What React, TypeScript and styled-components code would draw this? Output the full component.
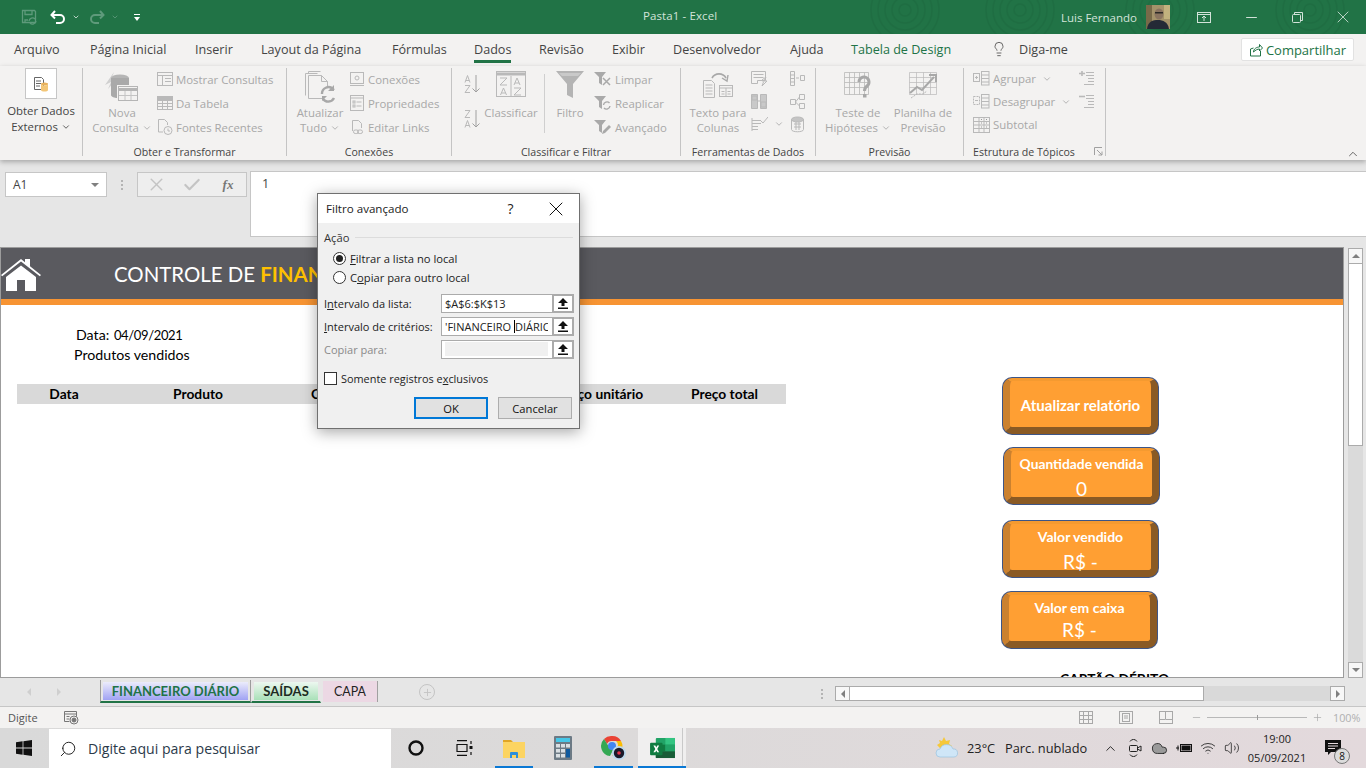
import React from 'react';
import styled, { createGlobalStyle } from 'styled-components';
import { ChevronDown, ChevronUp, Lightbulb, Search, X, Check, Minus, Plus, Volume2, Wifi, Cloud } from 'lucide-react';

const UI = '"Open Sans", "Noto Sans", sans-serif';
const SHEET = 'Lato, "Open Sans", sans-serif';
const DIS = '#a8a8a8';
const ICO = '#b9b9b9';

const Global = createGlobalStyle`
  html, body { margin: 0; padding: 0; background: #e6e6e6; }
  * { box-sizing: border-box; }
`;

const Page = styled.div`
  position: relative;
  width: 1366px;
  height: 768px;
  overflow: hidden;
  display: flex;
  flex-direction: column;
  font-family: ${UI};
  font-size: 12px;
  color: #444;
`;

/* title bar */
const TitleBar = styled.div`
  position: relative;
  height: 34px;
  flex: none;
  background: #217346;
  display: flex;
  align-items: center;
  overflow: hidden;
  color: #d3e3da;
`;
const Rings = styled.svg`
  position: absolute;
  left: 860px;
  top: 0;
  opacity: 0.22;
`;
const Qat = styled.div`
  position: relative;
  width: 643px;
  display: flex;
  align-items: center;
  padding-left: 21px;
  flex: none;
`;
const QatSlot = styled.span<{ $w: number }>`
  width: ${p => p.$w}px;
  display: flex;
  align-items: center;
  flex: none;
`;
const DocTitle = styled.div`
  position: relative;
  width: 418px;
  flex: none;
  font-size: 11.5px;
  letter-spacing: 0.1px;
  margin-top: -3px;
`;
const UserName = styled.div`
  position: relative;
  width: 85px;
  flex: none;
  font-size: 11.5px;
`;
const Avatar = styled.svg`
  position: relative;
  flex: none;
`;
const WinBtn = styled.span<{ $w: number }>`
  position: relative;
  flex: none;
  width: ${p => p.$w}px;
  display: flex;
  justify-content: center;
  align-items: center;
`;

/* tabs */
const TabRow = styled.div`
  height: 32px;
  flex: none;
  background: #f3f2f1;
  display: flex;
  align-items: center;
  padding-left: 14px;
`;
const Tab = styled.div<{ $green?: boolean; $w: number }>`
  width: ${p => p.$w}px;
  flex: none;
  margin-top: -2px;
  font-size: 12.6px;
  line-height: 17px;
  white-space: nowrap;
  color: ${p => (p.$green ? '#217346' : '#444')};
`;
const TabText = styled.span<{ $active?: boolean }>`
  position: relative;
  display: inline-block;
  &::after {
    content: '';
    display: ${p => (p.$active ? 'block' : 'none')};
    position: absolute;
    left: 0;
    right: 0;
    bottom: -5px;
    height: 3px;
    background: #217346;
  }
`;
const Bulb = styled.div`
  width: 28px;
  flex: none;
  display: flex;
  margin-top: -2px;
`;
const ShareButton = styled.div`
  position: absolute;
  left: 1241px;
  top: 38px;
  width: 113px;
  height: 23px;
  background: #fff;
  border: 1px solid #e2e2e2;
  border-radius: 2px;
  color: #217346;
  display: flex;
  align-items: center;
  justify-content: center;
  gap: 3px;
  font-size: 13px;
  font-weight: 500;
`;

/* ribbon */
const Ribbon = styled.div`
  position: relative;
  z-index: 2;
  height: 94px;
  flex: none;
  background: #f3f2f1;
  display: flex;
  padding-top: 2px;
  box-shadow: 0 2px 5px rgba(0, 0, 0, 0.28);
`;
const Group = styled.div<{ $w: number; $pad: number }>`
  position: relative;
  width: ${p => p.$w}px;
  height: 88px;
  flex: none;
  border-right: 1px solid #c4c4c4;
  display: flex;
  padding-left: ${p => p.$pad}px;
`;
const GroupLabel = styled.div<{ $inset?: number }>`
  position: absolute;
  left: 0;
  right: ${p => p.$inset ?? 0}px;
  top: 76px;
  line-height: 16px;
  text-align: center;
  font-size: 10.6px;
  color: #444;
  white-space: nowrap;
`;
const Launcher = styled.svg`
  position: absolute;
  right: 2px;
  top: 79px;
`;
const Large = styled.div<{ $w: number; $ml?: number }>`
  width: ${p => p.$w}px;
  margin-left: ${p => p.$ml ?? 0}px;
  flex: none;
  display: flex;
  flex-direction: column;
  align-items: center;
  line-height: 15px;
  font-size: 11.4px;
  color: ${DIS};
  white-space: nowrap;
`;
const LargeIcon = styled.div`
  height: 36.5px;
  display: flex;
  align-items: flex-start;
  justify-content: center;
  padding-top: 3px;
`;
const DataCol = styled.div`
  width: 82px;
  flex: none;
  display: flex;
  flex-direction: column;
  align-items: center;
  line-height: 16px;
  font-size: 11.4px;
  color: #444;
  white-space: nowrap;
`;
const SmallCol = styled.div<{ $ml?: number; $row?: number; $mt?: number }>`
  margin-left: ${p => p.$ml ?? 0}px;
  margin-top: ${p => p.$mt ?? -1}px;
  display: flex;
  flex-direction: column;
  flex: none;
  & > * { height: ${p => p.$row ?? 24}px; }
`;
const Small = styled.div`
  display: flex;
  align-items: center;
  gap: 3px;
  font-size: 11.4px;
  color: ${DIS};
  white-space: nowrap;
`;
const IconOnly = styled.div`
  display: flex;
  align-items: center;
`;
const VSep = styled.div`
  width: 1px;
  height: 59px;
  margin: 6px 0 0 6px;
  background: #cfcfcf;
  flex: none;
`;
const Caret = styled(ChevronDown).attrs({ size: 10, strokeWidth: 2 })`
  margin-left: 3px;
  vertical-align: -1px;
`;
const WideCaret = styled(Caret)`
  margin-left: 6px;
  color: ${DIS};
`;
const Collapse = styled.div`
  position: absolute;
  left: 1346px;
  top: 81px;
  display: flex;
`;
const DataBox = styled.div`
  width: 32px;
  height: 31px;
  margin-bottom: 4px;
  background: #fff;
  border: 1px solid #c6c6c6;
  display: flex;
  align-items: center;
  justify-content: center;
`;

/* formula bar */
const FormulaBar = styled.div`
  height: 87px;
  flex: none;
  background: #e6e6e6;
  display: flex;
  align-items: flex-start;
  padding: 12px 0 0 5px;
`;
const NameBox = styled.div`
  width: 102px;
  height: 25px;
  background: #fff;
  border: 1px solid #c6c6c6;
  display: flex;
  align-items: center;
  justify-content: space-between;
  padding: 0 7px;
  color: #444;
  font-size: 12px;
`;
const DownTri = styled.span`
  width: 0;
  height: 0;
  border-left: 4px solid transparent;
  border-right: 4px solid transparent;
  border-top: 4px solid #808080;
`;
const Dots = styled.div`
  width: 30px;
  height: 25px;
  display: flex;
  flex-direction: column;
  align-items: center;
  justify-content: center;
  gap: 2px;
  & > i { width: 2px; height: 2px; background: #b4b4b4; display: block; }
`;
const FnBox = styled.div`
  width: 110px;
  height: 25px;
  background: #eeeeee;
  border: 1px solid #c6c6c6;
  display: grid;
  grid-template-columns: repeat(3, 36px);
  justify-items: center;
  align-items: center;
`;
const Fx = styled.span`
  font-family: "Liberation Serif", serif;
  font-style: italic;
  font-weight: 700;
  font-size: 13px;
  color: #777;
`;
const FormulaInput = styled.div`
  margin-left: 3px;
  margin-top: -1px;
  flex: 1;
  height: 66px;
  background: #fff;
  border: 1px solid #c6c6c6;
  border-right: none;
  padding: 3px 11px;
  color: #444;
  font-size: 12.6px;
  line-height: 18px;
`;

/* worksheet */
const Workspace = styled.div`
  height: 433px;
  flex: none;
  background: #e6e6e6;
  display: flex;
`;
const Sheet = styled.div`
  width: 1344px;
  height: 431px;
  flex: none;
  background: #fff;
  border: 1px solid #9c9c9c;
  overflow: hidden;
  font-family: ${SHEET};
  color: #000;
`;
const Banner = styled.div`
  height: 57px;
  background: #5a5a5f;
  border-bottom: 6px solid #f79433;
  display: flex;
  align-items: center;
  color: #fff;
  white-space: nowrap;
`;
const HomeIcon = styled.svg`
  flex: none;
  margin-top: 1px;
`;
const BannerTitle = styled.div`
  margin-left: 73px;
  font-size: 20.4px;
  & > b { color: #ffc000; font-weight: 700; }
`;
const SheetBody = styled.div`
  display: flex;
`;
const SheetLeft = styled.div`
  width: 1001px;
  flex: none;
  padding-top: 20px;
`;
const Line = styled.div<{ $ml: number }>`
  margin-left: ${p => p.$ml}px;
  height: 20px;
  line-height: 20px;
  font-size: 14.2px;
  white-space: nowrap;
`;
const DateValue = styled.span`
  font-size: 13px;
  letter-spacing: -0.35px;
  margin-left: 1px;
`;
const TableHead = styled.div`
  margin: 19px 0 0 16px;
  width: 769px;
  height: 20px;
  background: #d9d9d9;
  display: flex;
  font-weight: 700;
  font-size: 13.8px;
  line-height: 20px;
`;
const HeadCell = styled.div<{ $w: number; $pl?: number }>`
  width: ${p => p.$w}px;
  text-align: ${p => (p.$pl ? 'left' : 'center')};
  padding-left: ${p => p.$pl ?? 0}px;
  white-space: nowrap;
`;
const SheetRight = styled.div`
  flex: 1;
  display: flex;
  flex-direction: column;
  padding-top: 72px;
`;
const Bevel = styled.div<{ $ml: number; $mt: number }>`
  width: 157px;
  height: 58px;
  flex: none;
  margin-left: ${p => p.$ml}px;
  margin-top: ${p => p.$mt}px;
  border-radius: 10px;
  overflow: hidden;
  background: #3d5587;
  padding: 1px;
`;
const BevelFace = styled.div<{ $top: number; $size: number }>`
  width: 100%;
  height: 100%;
  border-radius: 9px;
  border-style: solid;
  border-width: 3px 7px 7px 7px;
  border-color: #f59a30 #8a5a24 #8a5a24 #cb812f;
  background: #ff9f33;
  color: #fff;
  display: flex;
  flex-direction: column;
  align-items: center;
  font-weight: 700;
  font-size: ${p => p.$size}px;
  line-height: 16px;
  padding-top: ${p => p.$top}px;
  white-space: nowrap;
`;
const BevelValue = styled.div<{ $mt: number }>`
  font-weight: 400;
  font-size: 19px;
  line-height: 20px;
  margin-top: ${p => p.$mt}px;
`;
const ClippedLabel = styled.div`
  margin: 21px 0 0 58px;
  font-weight: 700;
  font-size: 13.8px;
  white-space: nowrap;
`;
const VScroll = styled.div`
  width: 15px;
  height: 430px;
  margin: 1px 0 0 4px;
  background: #dadada;
  display: flex;
  flex-direction: column;
`;
const ScrollBtn = styled.div`
  width: 15px;
  height: 16px;
  flex: none;
  background: #f7f7f7;
  border: 1px solid #ababab;
  display: flex;
  align-items: center;
  justify-content: center;
`;
const VThumb = styled.div`
  height: 182px;
  background: #fff;
  border: 1px solid #ababab;
  border-top: none;
`;
const Tri = styled.span<{ $dir: 'up' | 'down' | 'left' | 'right'; $c?: string }>`
  width: 0;
  height: 0;
  border: 4px solid transparent;
  ${p => {
    const c = p.$c ?? '#7f7f7f';
    if (p.$dir === 'up') return `border-bottom-color:${c};border-top-width:0;`;
    if (p.$dir === 'down') return `border-top-color:${c};border-bottom-width:0;`;
    if (p.$dir === 'left') return `border-right-color:${c};border-left-width:0;`;
    return `border-left-color:${c};border-right-width:0;`;
  }}
`;
const Spacer = styled.div`
  flex: 1;
`;

/* sheet tabs */
const SheetTabs = styled.div`
  height: 27px;
  flex: none;
  background: #e6e6e6;
  border-bottom: 1px solid #c6c6c6;
  display: flex;
  align-items: flex-start;
`;
const TabNav = styled.div`
  width: 100px;
  height: 24px;
  display: flex;
  align-items: center;
  padding-left: 27px;
  gap: 26px;
  flex: none;
`;
const SheetTab = styled.div<{ $w: number; $bg: string; $c: string; $active?: boolean }>`
  width: ${p => p.$w}px;
  height: 23px;
  flex: none;
  background: ${p => p.$bg};
  background-clip: content-box;
  padding: 2px 2px 1px;
  color: ${p => p.$c};
  font-family: ${SHEET};
  font-weight: 700;
  font-size: 13px;
  line-height: 18px;
  text-align: center;
  border-bottom: 2px solid #217346;
  border-left: 1px solid ${p => (p.$active ? '#9c9c9c' : 'transparent')};
  border-right: 1px solid ${p => (p.$active ? '#9c9c9c' : 'transparent')};
  white-space: nowrap;
`;
const CapaTab = styled.div`
  width: 55px;
  height: 21px;
  margin: 1px 0 0 2px;
  flex: none;
  background: #ecd8e4;
  border-right: 1px solid #a0a0a0;
  color: #222;
  font-family: ${SHEET};
  font-size: 12.4px;
  line-height: 21px;
  text-align: center;
`;
const AddSheet = styled.div`
  width: 16px;
  height: 16px;
  margin: 4px 0 0 41px;
  border: 1.5px solid #c4c4c4;
  border-radius: 50%;
  color: #c4c4c4;
  display: flex;
  align-items: center;
  justify-content: center;
  flex: none;
`;
const HScrollArea = styled.div`
  margin-left: auto;
  margin-right: 21px;
  display: flex;
  align-items: center;
  padding-top: 6px;
`;
const HDots = styled(Dots)`
  width: 20px;
  height: 14px;
  margin-right: 3px;
`;
const HBtn = styled(ScrollBtn)`
  width: 15px;
  height: 15px;
`;
const HTrack = styled.div`
  width: 480px;
  height: 15px;
  background: #d9d9d9;
  display: flex;
`;
const HThumb = styled.div`
  width: 354px;
  background: #fff;
  border: 1px solid #ababab;
  border-left: none;
`;

/* status bar */
const StatusBar = styled.div`
  height: 21px;
  flex: none;
  background: #f3f2f1;
  display: flex;
  align-items: center;
  padding-left: 8px;
  font-size: 11px;
  color: #555;
`;
const MacroIcon = styled.span`
  margin-left: 26px;
  display: flex;
`;
const ViewIcons = styled.div`
  margin-left: auto;
  display: flex;
  align-items: center;
  gap: 26px;
  margin-right: 18px;
`;
const ZoomBar = styled.div`
  display: flex;
  align-items: center;
  color: ${DIS};
  gap: 5px;
  width: 175px;
`;
const Slider = styled.div`
  position: relative;
  width: 100px;
  height: 1px;
  background: #b8b8b8;
  &::after {
    content: '';
    position: absolute;
    left: 50%;
    top: -2px;
    width: 1px;
    height: 5px;
    background: #9a9a9a;
  }
`;
const ZoomText = styled.span`
  margin-left: 5px;
  color: #b0b0b0;
  font-size: 10.8px;
`;

/* task bar */
const TaskBar = styled.div`
  height: 40px;
  flex: none;
  background: linear-gradient(90deg, #d9d9d9 0%, #dcdada 45%, #e3d9dc 100%);
  display: flex;
  align-items: stretch;
  color: #111;
`;
const StartBtn = styled.div`
  width: 49px;
  display: flex;
  align-items: center;
  justify-content: center;
  flex: none;
  padding-right: 1px;
`;
const SearchBox = styled.div`
  width: 342px;
  margin-top: 1px;
  background: #fff;
  display: flex;
  align-items: center;
  gap: 11px;
  padding-left: 10px;
  font-size: 14.1px;
  color: #2b3a4a;
  flex: none;
`;
const SearchGlass = styled(Search)`
  transform: scaleX(-1);
`;
const TaskCell = styled.div<{ $w: number; $running?: boolean; $active?: boolean }>`
  position: relative;
  width: ${p => p.$w}px;
  flex: none;
  display: flex;
  align-items: center;
  justify-content: center;
  background: ${p => (p.$active ? '#f0efef' : 'transparent')};
  &::after {
    content: '';
    display: ${p => (p.$running ? 'block' : 'none')};
    position: absolute;
    left: ${p => (p.$active ? 0 : 6)}px;
    right: ${p => (p.$active ? 0 : 5)}px;
    bottom: 0;
    height: 2px;
    background: #0a78d4;
  }
`;
const ExcelDivider = styled.span`
  position: absolute;
  right: 3px;
  top: 0;
  bottom: 0;
  width: 1px;
  background: #c9c9c9;
`;
const Tray = styled.div`
  margin-left: auto;
  display: flex;
  align-items: center;
  font-size: 13px;
  padding-right: 10px;
`;
const TrayCell = styled.div<{ $w: number; $pr?: number }>`
  width: ${p => p.$w}px;
  padding-right: ${p => p.$pr ?? 0}px;
  flex: none;
  display: flex;
  align-items: center;
  justify-content: center;
  position: relative;
`;
const TrayText = styled.div<{ $w: number }>`
  width: ${p => p.$w}px;
  flex: none;
  white-space: nowrap;
  font-size: 12.8px;
  color: #222;
`;
const Clock = styled.div`
  width: 66px;
  flex: none;
  text-align: center;
  font-size: 11px;
  line-height: 19px;
  color: #222;
`;
const NotifBadge = styled.span`
  position: absolute;
  left: 24px;
  top: 8px;
  width: 16px;
  height: 16px;
  border-radius: 50%;
  background: #dcdcdc;
  border: 1px solid #777;
  font-size: 10px;
  line-height: 14px;
  text-align: center;
  color: #111;
`;

/* dialog */
const Dialog = styled.div`
  position: absolute;
  left: 317px;
  top: 193px;
  width: 263px;
  height: 236px;
  z-index: 5;
  background: #f0f0f0;
  border: 1px solid #707070;
  box-shadow: 0 3px 14px rgba(0, 0, 0, 0.35);
  color: #222;
  font-size: 11.2px;
  display: flex;
  flex-direction: column;
`;
const DialogHead = styled.div`
  height: 29px;
  flex: none;
  background: #fff;
  display: flex;
  align-items: center;
  padding-left: 8px;
  font-size: 11.6px;
`;
const HeadTitle = styled.div`
  width: 173px;
  flex: none;
`;
const HeadHelp = styled.div`
  width: 23px;
  flex: none;
  font-size: 14px;
  text-align: center;
`;
const HeadClose = styled.div`
  margin-left: 22px;
  display: flex;
`;
const DialogBody = styled.div`
  padding: 0 6px;
  display: flex;
  flex-direction: column;
  flex: 1;
`;
const Legend = styled.div`
  display: flex;
  align-items: center;
  gap: 6px;
  height: 16px;
  margin-top: 6px;
  margin-bottom: 4px;
  color: #333;
  &::after {
    content: '';
    flex: 1;
    height: 1px;
    background: #dcdcdc;
  }
`;
const RadioRow = styled.div`
  display: flex;
  align-items: center;
  height: 19px;
  padding-left: 9px;
  gap: 4px;
`;
const RadioDot = styled.span<{ $on?: boolean }>`
  width: 13px;
  height: 13px;
  flex: none;
  border-radius: 50%;
  background: #fff;
  border: 1px solid #333;
  display: flex;
  align-items: center;
  justify-content: center;
  &::after {
    content: '';
    display: ${p => (p.$on ? 'block' : 'none')};
    width: 7px;
    height: 7px;
    border-radius: 50%;
    background: #222;
  }
`;
const Ranges = styled.div`
  margin-top: 7px;
  display: flex;
  flex-direction: column;
  gap: 4px;
`;
const RangeRow = styled.div<{ $off?: boolean }>`
  display: flex;
  align-items: center;
  height: 19px;
  color: ${p => (p.$off ? '#8a8a8a' : '#222')};
`;
const RangeLabel = styled.div`
  width: 117px;
  flex: none;
  white-space: nowrap;
  font-size: 11px;
`;
const RangeField = styled.div`
  width: 111px;
  height: 19px;
  flex: none;
  background: #fff;
  border: 1px solid #ababab;
  border-right: none;
  padding: 0 4px 0 3px;
  line-height: 17px;
  font-size: 11px;
  color: #222;
  white-space: nowrap;
`;
const RangeClip = styled.div<{ $off?: boolean }>`
  height: ${p => (p.$off ? '14px' : '17px')};
  margin-top: ${p => (p.$off ? '1px' : '0')};
  background: ${p => (p.$off ? '#f0f0f0' : 'transparent')};
  overflow: hidden;
`;
const Caret2 = styled.span`
  display: inline-block;
  width: 1px;
  height: 13px;
  background: #000;
  vertical-align: -2px;
`;
const RangeBtn = styled.div`
  width: 22px;
  height: 19px;
  flex: none;
  background: #fff;
  border: 2px solid #ababab;
  display: flex;
  align-items: center;
  justify-content: center;
`;
const CheckRow = styled.div`
  display: flex;
  align-items: center;
  gap: 4px;
  margin-top: 11px;
  height: 16px;
  font-size: 10.9px;
`;
const CheckBox = styled.span`
  width: 13px;
  height: 13px;
  background: #fff;
  border: 1px solid #333;
  flex: none;
`;
const DialogButtons = styled.div`
  display: flex;
  justify-content: flex-end;
  gap: 10px;
  margin-top: 11px;
  padding-right: 1px;
`;
const DlgBtn = styled.div<{ $primary?: boolean }>`
  width: 74px;
  height: 22px;
  background: #e1e1e1;
  border: ${p => (p.$primary ? '2px solid #0078d7' : '1px solid #adadad')};
  display: flex;
  align-items: center;
  justify-content: center;
  color: #111;
  font-size: 11.2px;
`;

/* drawings */
const S = { fill: 'none', stroke: ICO, strokeWidth: 1 };

const GridIcon = ({ size = 16, c = ICO }: { size?: number; c?: string }) => (
  <svg width={size} height={size} viewBox="0 0 16 16" fill="none" stroke={c}>
    <rect x="0.5" y="1.5" width="15" height="13" />
    <path d="M0.5 5.5h15M0.5 8.5h15M0.5 11.5h15M5.5 5v9M10.5 5v9" />
    <rect x="0.5" y="1.5" width="15" height="3" fill={c} />
  </svg>
);

const QueryPanelIcon = () => (
  <svg width="16" height="16" viewBox="0 0 16 16" {...S}>
    <rect x="0.5" y="1.5" width="15" height="13" />
    <path d="M0.5 4.5h15M5.5 5v9M8 7.5h6M8 10.5h6" />
  </svg>
);
const RecentIcon = () => (
  <svg width="16" height="18" viewBox="0 0 16 18" {...S}>
    <path d="M6 14H1.5V1.5h6l3 3V7" />
    <circle cx="11" cy="12.5" r="4" />
    <path d="M11 10.5v2.5h2" />
  </svg>
);
const ConnIcon = () => (
  <svg width="16" height="16" viewBox="0 0 16 16" {...S}>
    <rect x="1.5" y="1.5" width="13" height="11" />
    <circle cx="8" cy="7" r="2" />
    <path d="M1 14.5h14" />
  </svg>
);
const PropsIcon = () => (
  <svg width="16" height="16" viewBox="0 0 16 16" {...S}>
    <rect x="1.5" y="0.5" width="13" height="15" />
    <path d="M1.5 3h13M7.5 7h5M7.5 11h5" />
    <rect x="4" y="6" width="2" height="2" />
    <rect x="4" y="10" width="2" height="2" />
  </svg>
);
const LinkIcon = () => (
  <svg width="16" height="16" viewBox="0 0 16 16" {...S}>
    <path d="M3.5 12V1.5h6l3 3V9" />
    <rect x="4.5" y="11" width="5" height="3.5" rx="1.7" />
    <rect x="8.5" y="11" width="5" height="3.5" rx="1.7" />
  </svg>
);
const QueryLarge = () => (
  <svg width="34" height="34" viewBox="0 0 34 34" fill="none">
    <path d="M0 14 L9 1 L6 9 L11 9 L3 18 L6 11Z" fill="#d0d0d0" />
    <ellipse cx="15" cy="7" rx="9" ry="3.5" fill="#b5b5b5" />
    <path d="M6 7v17c0 2 4 3 6 3V14h12V7" fill="#a9a9a9" />
    <rect x="13.5" y="15.5" width="19" height="14" fill="#f3f2f1" stroke="#b5b5b5" />
    <path d="M13.5 18.5h19" stroke="#b5b5b5" strokeWidth="3" />
    <path d="M20 20v9M26 20v9M14 24.5h18" stroke="#c4c4c4" />
  </svg>
);
const RefreshLarge = () => (
  <svg width="32" height="32" viewBox="0 0 32 32" fill="none" stroke={ICO}>
    <path d="M1.5 2.5h12M1.5 2.5v22M4.5 0.5h12M4.5 0.5v2" />
    <path d="M4.5 4.5v23h14" fill="#f3f2f1" />
    <path d="M4.5 4.5h13l6 6v5M17.5 4.5v6h6" />
    <path d="M18 23a6.5 6.5 0 0 1 11-5l1 1M30 27a6.5 6.5 0 0 1-11 1" stroke="#a8a8a8" strokeWidth="2.4" />
    <path d="M30 14v6h-6M18 30v-5h5" fill="#a8a8a8" stroke="none" />
  </svg>
);
const SortAZ = ({ flip }: { flip?: boolean }) => (
  <svg width="16" height="20" viewBox="0 0 16 20" fill="none" stroke={ICO}>
    <path d={flip ? 'M1 1.5h5L1 8.5h5' : 'M1 8.5l2.5-7 2.5 7M1.8 6.5h3.4'} strokeWidth="1" />
    <path d={flip ? 'M1 18.5l2.5-7 2.5 7M1.8 16.5h3.4' : 'M1 11.5h5L1 18.5h5'} strokeWidth="1" />
    <path d="M12 1v17M8.5 14.5l3.5 3.5 3.5-3.5" stroke="#a0a0a0" />
  </svg>
);
const SortLarge = () => (
  <svg width="30" height="26" viewBox="0 0 30 26" fill="none" stroke={ICO}>
    <rect x="0.5" y="0.5" width="29" height="25" />
    <path d="M0.5 3h29" strokeWidth="3" />
    <path d="M15 5v20" />
    <path d="M4 7h7L4 14h7M4.500 24l3-7 3 7M5.500 22h4M18 14l3-7 3 7M19 12h4M18 17h7l-7 7h7" />
  </svg>
);
const FunnelLarge = () => (
  <svg width="28" height="28" viewBox="0 0 28 28">
    <path d="M0 0h28L17 13v14l-6-3V13Z" fill="#b4b4b4" />
    <path d="M3 2h22l-3 3H6Z" fill="#c9c9c9" />
  </svg>
);
const FunnelSmall = ({ mark }: { mark: 'x' | 'r' | 'p' }) => (
  <svg width="18" height="16" viewBox="0 0 18 16" fill="none">
    <path d="M0 1h12L8 6v8L5 12V6Z" fill="#a9a9a9" />
    {mark === 'x' && <path d="M9 7l7 7M16 7l-7 7" stroke="#a9a9a9" strokeWidth="1.5" />}
    {mark === 'r' && <path d="M9.500 10a3.500 3.500 0 0 1 6-2M16 11a3.500 3.500 0 0 1-6 2" stroke="#a9a9a9" strokeWidth="1.4" />}
    {mark === 'p' && <path d="M8 15l1-3 6-6 2 2-6 6Z" fill="#a9a9a9" />}
  </svg>
);
const TextColumnsLarge = () => (
  <svg width="32" height="28" viewBox="0 0 32 28" fill="none" stroke={ICO}>
    <path d="M1.500 26.500V9.500h8l3 3v14Z" fill="#f3f2f1" />
    <path d="M3.500 14h7M3.500 17h7M3.500 20h7M3.500 23h7" />
    <path d="M10 7a8 8 0 0 1 14 0" stroke="#a8a8a8" strokeWidth="1.6" />
    <path d="M20 7l5 3 1-6" stroke="#a8a8a8" strokeWidth="1.4" />
    <rect x="17.500" y="14.500" width="13" height="11" />
    <path d="M17.500 17h13M24 17v8M19.500 20.500h3M25.500 20.500h3M19.500 23h3M25.500 23h3" />
  </svg>
);
const MiniData = ({ kind }: { kind: number }) => (
  <svg width="17" height="17" viewBox="0 0 17 17" fill="none" stroke={ICO}>
    {kind === 0 && <path d="M0.500 1.500h14v9h-8v3h-6ZM2.500 4.500h10M2.500 7.500h10M11 10l4-3-2 4h3l-5 5 1.500-4Z" />}
    {kind === 1 && <path d="M0.500 1.500h6v14h-6ZM9.500 1.500h6v14h-6ZM7 8h2M1 3h5v4H1ZM10 9h5v5h-5Z" fill="#c9c9c9" />}
    {kind === 2 && <path d="M1 4.500h9M1 7.500h9M1 10.500h6M1 13.500h6M1 2v13M9 4l3 3 5-6" />}
    {kind === 3 && <path d="M1.500 1.500h4v14h-4ZM1.500 5h4M1.500 8.500h4M1.500 12h4M7 8h3M11.500 5.500h4v5h-4Z" />}
    {kind === 4 && <path d="M1.500 6.500h5v5h-5ZM10.500 1.500h5v5h-5ZM10.500 10.500h5v5h-5ZM6.500 9l4-5M6.500 9l4 4" />}
    {kind === 5 && (
      <>
        <ellipse cx="8.500" cy="3.500" rx="6" ry="2.500" fill="#c4c4c4" />
        <path d="M2.500 3.500v10c0 3 12 3 12 0v-10M5 8h7M5 11h7M7 6v8M10 6v8" />
      </>
    )}
  </svg>
);
const WhatIfLarge = () => (
  <svg width="30" height="30" viewBox="0 0 30 30" fill="none" stroke={ICO}>
    <path d="M1.500 1.500h24v22h-24ZM1.500 6.500h24M1.500 11.500h24M1.500 16.500h24M6.500 1.500v22M11.500 1.500v22M16.500 1.500v22M21.500 1.500v22" strokeWidth="0.8" />
    <path d="M16 11a5 5 0 1 1 8 4c-2 1.500-2.500 2-2.500 5" stroke="#a8a8a8" strokeWidth="3" />
    <rect x="20" y="23" width="3.500" height="3.500" fill="#a8a8a8" stroke="none" />
  </svg>
);
const ForecastLarge = () => (
  <svg width="30" height="28" viewBox="0 0 30 28" fill="none" stroke={ICO}>
    <path d="M1.500 1.500h27v22h-27ZM1.500 6.500h27M1.500 11.500h27M1.500 16.500h27M8.500 1.500v22M15.500 1.500v22M22.500 1.500v22" strokeWidth="0.7" />
    <path d="M2 22l7-6 5 3 12-13" stroke="#a8a8a8" strokeWidth="2" />
    <path d="M21 4h7v7" stroke="#a8a8a8" strokeWidth="2" />
    <path d="M3 27l6-4h6l4-3" strokeDasharray="2 1" />
  </svg>
);
const OutlineIcon = ({ minus }: { minus?: boolean }) => (
  <svg width="17" height="15" viewBox="0 0 17 15" fill="none" stroke={ICO}>
    <rect x="0.500" y="2.500" width="6" height="8" strokeDasharray={minus ? '2 1' : undefined} />
    <path d={minus ? 'M2 6.500h3' : 'M2 6.500h3M3.500 5v3'} />
    <rect x="8.500" y="0.500" width="7.500" height="13.500" />
    <path d="M8.500 4h7.500M8.500 7.500h7.500M8.500 11h7.500" />
  </svg>
);
const SubtotalIcon = () => (
  <svg width="17" height="16" viewBox="0 0 17 16" fill="none" stroke={ICO}>
    <rect x="0.500" y="0.500" width="16" height="15" />
    <path d="M0.500 4.500h16M0.500 8h16M0.500 11.500h16M6 0.500v15M11 0.500v15" />
    <path d="M8 2.500h1M13 2.500h1M8 6h1M13 6h1M8 10h1M13 10h1" stroke="#999" />
  </svg>
);
const LevelIcon = ({ minus }: { minus?: boolean }) => (
  <svg width="15" height="14" viewBox="0 0 15 14" fill="none" stroke={ICO}>
    <path d={minus ? 'M0 2.500h6' : 'M0 2.500h6M3 0v5'} strokeWidth="1.600" />
    <path d="M7 1.500h8M7 4.500h8M9 7.500h6M9 10.500h6M5 13.500h10" />
  </svg>
);

const ExcelLogo = () => (
  <svg width="25" height="22" viewBox="0 0 26 23">
    <rect x="6" y="1" width="20" height="21" rx="1" fill="#21a366" />
    <rect x="16" y="1" width="10" height="7" fill="#33c481" />
    <rect x="6" y="8" width="10" height="7" fill="#107c41" />
    <rect x="16" y="8" width="10" height="7" fill="#21a366" />
    <rect x="6" y="15" width="20" height="7" fill="#185c37" />
    <rect x="0" y="6" width="13" height="13" rx="1" fill="#107c41" />
    <path d="M3.500 9h2l1 2 1-2h2l-2 3.500L9.500 16h-2l-1-2-1 2h-2l2-3.500Z" fill="#fff" />
  </svg>
);
const ChromeLogo = () => (
  <svg width="26" height="26" viewBox="-1 0 26 26">
    <path d="M11 1a10 10 0 0 1 9 5H11a5 5 0 0 0-5 3L3 4a10 10 0 0 1 8-3Z" fill="#ea4335" />
    <path d="M3 4l5 8a5 5 0 0 0 4 3l-3 6A10 10 0 0 1 3 4Z" fill="#34a853" />
    <path d="M20 6a10 10 0 0 1-9 15l4-7a5 5 0 0 0 0-8Z" fill="#fbbc04" />
    <circle cx="11" cy="11" r="4" fill="#4285f4" />
    <circle cx="18" cy="18" r="7" fill="#bcd9ee" />
    <circle cx="18" cy="18" r="5.200" fill="#1a1a2a" />
    <circle cx="18" cy="18" r="1.800" fill="#e8334a" />
  </svg>
);

function Arrow() {
  return (
    <svg width="10" height="11" viewBox="0 0 10 11" fill="#111">
      <path d="M5 0l5 5H6.500v3h-3V5H0ZM0 9.500h10V11H0Z" />
    </svg>
  );
}

export default function App() {
  return (
    <Page>
      <Global />
      <TitleBar>
        <Rings width="506" height="34" viewBox="0 0 506 34" fill="none" stroke="#195c38" strokeWidth="1.500">
          {[45, 160, 300, 450].map(cx =>
            [6, 13, 20, 27, 34].map(r => <circle key={`${cx}-${r}`} cx={cx} cy={10} r={r} />)
          )}
        </Rings>
        <Qat>
          <QatSlot $w={29}>
            <svg width="16" height="16" viewBox="0 0 16 16" fill="none" stroke="#5e9a7b" strokeWidth="1.300">
              <path d="M1.500 1.500h12l1 1v11h-13ZM4 1.500v4h7v-4M4 14v-3h3" />
              <path d="M8 12a3.500 3.500 0 0 1 6-2M15 12a3.500 3.500 0 0 1-6 2" />
            </svg>
          </QatSlot>
          <QatSlot $w={22}>
            <svg width="16" height="14" viewBox="0 0 16 14" fill="none" stroke="#fff" strokeWidth="2">
              <path d="M5 1L1.500 5 5 8.500M2 5h8a3.800 3.800 0 0 1 0 8H6" />
            </svg>
          </QatSlot>
          <QatSlot $w={17}><ChevronDown size={8} color="#d3e3da" strokeWidth={2.500} /></QatSlot>
          <QatSlot $w={22}>
            <svg width="16" height="14" viewBox="0 0 16 14" fill="none" stroke="#5e9a7b" strokeWidth="2">
              <path d="M11 1l3.500 4L11 8.500M14 5H6a3.800 3.800 0 0 0 0 8h4" />
            </svg>
          </QatSlot>
          <QatSlot $w={23}><ChevronDown size={8} color="#5e9a7b" strokeWidth={2.500} /></QatSlot>
          <QatSlot $w={10}>
            <svg width="6" height="7" viewBox="0 0 6 7">
              <path d="M0 0h6v1H0ZM0 3h6L3 7Z" fill="#fff" />
            </svg>
          </QatSlot>
        </Qat>
        <DocTitle>Pasta1 - Excel</DocTitle>
        <UserName>Luis Fernando</UserName>
        <Avatar width="24" height="24" viewBox="0 0 24 24">
          <rect width="24" height="24" fill="#a4936a" />
          <rect width="6" height="24" fill="#786a49" />
          <rect x="18" width="6" height="14" fill="#c2b27e" />
          <path d="M1 24c1-8 6-9 11-9s10 2 11 9Z" fill="#242a36" />
          <ellipse cx="13" cy="9" rx="4.500" ry="5.500" fill="#8a7460" />
          <rect x="9" y="7" width="8" height="1.500" fill="#2c2a26" />
        </Avatar>
        <WinBtn $w={68}>
          <svg width="14" height="11" viewBox="0 0 14 11" fill="none" stroke="#d3e3da">
            <rect x="0.500" y="0.500" width="13" height="10" />
            <path d="M0.500 2.500h13M7 9V4.500M5 6l2-2 2 2" />
          </svg>
        </WinBtn>
        <WinBtn $w={26}><Minus size={17} color="#d3e3da" strokeWidth={1.400} /></WinBtn>
        <WinBtn $w={66}>
          <svg width="11" height="11" viewBox="0 0 11 11" fill="none" stroke="#d3e3da">
            <rect x="0.500" y="2.500" width="8" height="8" rx="1" />
            <path d="M2.500 2.500V0.500h8v8H8.500" />
          </svg>
        </WinBtn>
        <WinBtn $w={26}><X size={20} color="#d3e3da" strokeWidth={1} /></WinBtn>
      </TitleBar>

      <TabRow>
        <Tab $w={76}>Arquivo</Tab>
        <Tab $w={105}>Página Inicial</Tab>
        <Tab $w={66}>Inserir</Tab>
        <Tab $w={131}>Layout da Página</Tab>
        <Tab $w={82}>Fórmulas</Tab>
        <Tab $w={65}><TabText $active>Dados</TabText></Tab>
        <Tab $w={73}>Revisão</Tab>
        <Tab $w={61}>Exibir</Tab>
        <Tab $w={117}>Desenvolvedor</Tab>
        <Tab $w={61}>Ajuda</Tab>
        <Tab $w={140} $green>Tabela de Design</Tab>
        <Bulb><Lightbulb size={16} strokeWidth={1.200} color="#444" /></Bulb>
        <Tab $w={60}>Diga-me</Tab>
      </TabRow>
      <ShareButton>
        <svg width="14" height="14" viewBox="0 0 14 14" fill="none" stroke="#217346">
          <path d="M1.500 6v7h10V8M1.500 6l3-1M4.500 9c0-3 3-5 6-5V1.500l3 3.500-3 3V6c-2 0-4 1-6 3Z" />
        </svg>
        Compartilhar
      </ShareButton>

      <Ribbon>
        <Group $w={83} $pad={0}>
          <DataCol>
            <DataBox>
              <svg width="16" height="16" viewBox="0 0 16 16" fill="none">
                <path d="M1.500 1.500h7l2 2v10h-9Z" stroke="#666" />
                <path d="M3 5h5M3 7.500h5M3 10h4" stroke="#666" />
                <ellipse cx="11.500" cy="8" rx="3.500" ry="1.500" fill="#e8b15c" />
                <path d="M8 8v6c0 2 7 2 7 0V8c0 2-7 2-7 0Z" fill="#f3c677" />
              </svg>
            </DataBox>
            <span>Obter Dados</span>
            <span>Externos<Caret /></span>
          </DataCol>
        </Group>

        <Group $w={204} $pad={8}>
          <Large $w={62}>
            <LargeIcon><QueryLarge /></LargeIcon>
            <span>Nova</span>
            <span>Consulta<Caret /></span>
          </Large>
          <SmallCol $ml={4}>
            <Small><QueryPanelIcon />Mostrar Consultas</Small>
            <Small><GridIcon />Da Tabela</Small>
            <Small><RecentIcon />Fontes Recentes</Small>
          </SmallCol>
          <GroupLabel>Obter e Transformar</GroupLabel>
        </Group>

        <Group $w={165} $pad={5}>
          <Large $w={56}>
            <LargeIcon><RefreshLarge /></LargeIcon>
            <span>Atualizar</span>
            <span>Tudo<Caret /></span>
          </Large>
          <SmallCol $ml={1}>
            <Small><ConnIcon />Conexões</Small>
            <Small><PropsIcon />Propriedades</Small>
            <Small><LinkIcon />Editar Links</Small>
          </SmallCol>
          <GroupLabel>Conexões</GroupLabel>
        </Group>

        <Group $w={229} $pad={12}>
          <SmallCol $row={35} $mt={-2}>
            <IconOnly><SortAZ /></IconOnly>
            <IconOnly><SortAZ flip /></IconOnly>
          </SmallCol>
          <Large $w={54} $ml={4}>
            <LargeIcon><SortLarge /></LargeIcon>
            <span>Classificar</span>
          </Large>
          <VSep />
          <Large $w={30} $ml={10}>
            <LargeIcon><FunnelLarge /></LargeIcon>
            <span>Filtro</span>
          </Large>
          <SmallCol $ml={9}>
            <Small><FunnelSmall mark="x" />Limpar</Small>
            <Small><FunnelSmall mark="r" />Reaplicar</Small>
            <Small><FunnelSmall mark="p" />Avançado</Small>
          </SmallCol>
          <GroupLabel>Classificar e Filtrar</GroupLabel>
        </Group>

        <Group $w={135} $pad={7}>
          <Large $w={60}>
            <LargeIcon><TextColumnsLarge /></LargeIcon>
            <span>Texto para</span>
            <span>Colunas</span>
          </Large>
          <SmallCol $ml={3} $row={23} $mt={-1.500}>
            <IconOnly><MiniData kind={0} /></IconOnly>
            <IconOnly><MiniData kind={1} /></IconOnly>
            <IconOnly><MiniData kind={2} /><WideCaret /></IconOnly>
          </SmallCol>
          <SmallCol $ml={5} $row={23} $mt={-1.500}>
            <IconOnly><MiniData kind={3} /></IconOnly>
            <IconOnly><MiniData kind={4} /></IconOnly>
            <IconOnly><MiniData kind={5} /></IconOnly>
          </SmallCol>
          <GroupLabel>Ferramentas de Dados</GroupLabel>
        </Group>

        <Group $w={148} $pad={7}>
          <Large $w={70}>
            <LargeIcon><WhatIfLarge /></LargeIcon>
            <span>Teste de</span>
            <span>Hipóteses<Caret /></span>
          </Large>
          <Large $w={60}>
            <LargeIcon><ForecastLarge /></LargeIcon>
            <span>Planilha de</span>
            <span>Previsão</span>
          </Large>
          <GroupLabel>Previsão</GroupLabel>
        </Group>

        <Group $w={142} $pad={9}>
          <SmallCol $row={23}>
            <Small><OutlineIcon />Agrupar<Caret /></Small>
            <Small><OutlineIcon minus />Desagrupar<Caret /></Small>
            <Small><SubtotalIcon />Subtotal</Small>
          </SmallCol>
          <SmallCol $row={23} $ml={8} $mt={-2}>
            <IconOnly><LevelIcon /></IconOnly>
            <IconOnly><LevelIcon minus /></IconOnly>
          </SmallCol>
          <GroupLabel $inset={21}>Estrutura de Tópicos</GroupLabel>
          <Launcher width="9" height="9" viewBox="0 0 9 9" fill="none" stroke="#a0a0a0">
            <path d="M0.500 8V0.500H8M3 3l5 5M8 4.500V8H4.500" />
          </Launcher>
        </Group>
        <Collapse><ChevronUp size={14} color="#555" strokeWidth={1.500} /></Collapse>
      </Ribbon>

      <FormulaBar>
        <NameBox>A1<DownTri /></NameBox>
        <Dots><i /><i /><i /></Dots>
        <FnBox>
          <X size={21} color="#c4c4c4" strokeWidth={1.700} />
          <Check size={20} color="#c4c4c4" strokeWidth={2.600} />
          <Fx>fx</Fx>
        </FnBox>
        <FormulaInput>1</FormulaInput>
      </FormulaBar>

      <Workspace>
        <Sheet>
          <Banner>
            <HomeIcon width="40" height="33" viewBox="0 0 40 33" fill="#fff">
              <path d="M0 17L20 1l4 3.200V1h5v7.200L40 17l-1.200 1.200L20 3.500 1.200 18.200Z" />
              <path d="M5 19L20 7.500 35 19v14H24V22h-8v11H5Z" />
            </HomeIcon>
            <BannerTitle>CONTROLE DE <b>FINANCEIRO</b> DIÁRIO</BannerTitle>
          </Banner>
          <SheetBody>
            <SheetLeft>
              <Line $ml={75}>Data: <DateValue>04/09/2021</DateValue></Line>
              <Line $ml={73}>Produtos vendidos</Line>
              <TableHead>
                <HeadCell $w={94}>Data</HeadCell>
                <HeadCell $w={174}>Produto</HeadCell>
                <HeadCell $w={252} $pl={26}>Cliente</HeadCell>
                <HeadCell $w={126}>Preço unitário</HeadCell>
                <HeadCell $w={123}>Preço total</HeadCell>
              </TableHead>
            </SheetLeft>
            <SheetRight>
              <Bevel $ml={0} $mt={0}>
                <BevelFace $top={16} $size={15}>Atualizar relatório</BevelFace>
              </Bevel>
              <Bevel $ml={1} $mt={12}>
                <BevelFace $top={5} $size={13.800}>Quantidade vendida<BevelValue $mt={7}>0</BevelValue></BevelFace>
              </Bevel>
              <Bevel $ml={0} $mt={15}>
                <BevelFace $top={5} $size={14}>Valor vendido<BevelValue $mt={7}>R$ -</BevelValue></BevelFace>
              </Bevel>
              <Bevel $ml={-1} $mt={13}>
                <BevelFace $top={5} $size={14}>Valor em caixa<BevelValue $mt={4}>R$ -</BevelValue></BevelFace>
              </Bevel>
              <ClippedLabel>CARTÃO DÉBITO</ClippedLabel>
            </SheetRight>
          </SheetBody>
        </Sheet>
        <VScroll>
          <ScrollBtn><Tri $dir="up" /></ScrollBtn>
          <VThumb />
          <Spacer />
          <ScrollBtn><Tri $dir="down" /></ScrollBtn>
        </VScroll>
      </Workspace>

      <SheetTabs>
        <TabNav>
          <Tri $dir="left" $c="#cfcfcf" />
          <Tri $dir="right" $c="#cfcfcf" />
        </TabNav>
        <SheetTab $w={151} $active $c="#217346" $bg="linear-gradient(180deg, #f4f4fd 0%, #9c9ef2 100%)">FINANCEIRO DIÁRIO</SheetTab>
        <SheetTab $w={70} $c="#1d2b22" $bg="linear-gradient(180deg, #f4faf6 0%, #a5dfb5 100%)">SAÍDAS</SheetTab>
        <CapaTab>CAPA</CapaTab>
        <AddSheet><Plus size={11} strokeWidth={2} /></AddSheet>
        <HScrollArea>
          <HDots><i /><i /><i /></HDots>
          <HBtn><Tri $dir="left" /></HBtn>
          <HTrack><HThumb /></HTrack>
          <HBtn><Tri $dir="right" /></HBtn>
        </HScrollArea>
      </SheetTabs>

      <StatusBar>
        Digite
        <MacroIcon>
          <svg width="15" height="14" viewBox="0 0 15 14" fill="none" stroke="#777">
            <path d="M0.500 0.500h12v5M0.500 0.500v10h5M0.500 3h12M2.500 5.500h3M2.500 8h3" />
            <circle cx="10" cy="9" r="4" />
            <circle cx="10" cy="9" r="2" fill="#777" />
          </svg>
        </MacroIcon>
        <ViewIcons>
          <svg width="14" height="13" viewBox="0 0 14 13" fill="none" stroke="#a8a8a8">
            <rect x="0.500" y="0.500" width="13" height="12" />
            <path d="M0.500 4.500h13M0.500 8.500h13M4.500 0.500v12M9.500 0.500v12" />
          </svg>
          <svg width="14" height="13" viewBox="0 0 14 13" fill="none" stroke="#a8a8a8">
            <rect x="0.500" y="0.500" width="13" height="12" />
            <rect x="3.500" y="2.500" width="7" height="8" />
            <path d="M5 5h4M5 7h4" />
          </svg>
          <svg width="14" height="13" viewBox="0 0 14 13" fill="none" stroke="#a8a8a8">
            <rect x="0.500" y="0.500" width="13" height="12" />
            <path d="M0.500 8.500h6v-8M7 8.500h6.500" />
          </svg>
        </ViewIcons>
        <ZoomBar>
          <Minus size={11} strokeWidth={1.500} />
          <Slider />
          <Plus size={11} strokeWidth={1.500} />
          <ZoomText>100%</ZoomText>
        </ZoomBar>
      </StatusBar>

      <TaskBar>
        <StartBtn>
          <svg width="16" height="16" viewBox="0 0 16 16" fill="#111">
            <path d="M0 2.300l6.600-1v6.300H0ZM7.400 1.200L16 0v7.600H7.400ZM0 8.400h6.600v6.300L0 13.700ZM7.400 8.400H16V16l-8.600-1.200Z" />
          </svg>
        </StartBtn>
        <SearchBox>
          <SearchGlass size={18} strokeWidth={1.300} color="#222" />
          Digite aqui para pesquisar
        </SearchBox>
        <TaskCell $w={49}>
          <svg width="16" height="16" viewBox="0 0 16 16" fill="none" stroke="#111" strokeWidth="2.400">
            <circle cx="8" cy="8" r="6.500" />
          </svg>
        </TaskCell>
        <TaskCell $w={49}>
          <svg width="18" height="16" viewBox="0 0 18 16" fill="none" stroke="#111" strokeWidth="1.200">
            <path d="M1 0.600h10M1 15.400h10M1 4.500h10v7H1Z" />
            <path d="M15 1v3M15 12v3" />
            <rect x="13.500" y="6" width="3" height="3" fill="#111" stroke="none" />
          </svg>
        </TaskCell>
        <TaskCell $w={49} $running>
          <svg width="22" height="19" viewBox="0 0 22 19">
            <path d="M0 1h8l2 2h-10Z" fill="#e0a526" />
            <rect y="3" width="22" height="16" fill="#fcd462" />
            <path d="M7 19v-5a1 1 0 0 1 1-1h6a1 1 0 0 1 1 1v5h-2v-3H9v3Z" fill="#2d8fdc" />
          </svg>
        </TaskCell>
        <TaskCell $w={50}>
          <svg width="18" height="24" viewBox="0 0 18 24">
            <rect width="18" height="24" rx="1" fill="#6c7a85" />
            <rect x="2" y="2" width="14" height="4" fill="#46c7e8" />
            <g fill="#d9dfe3">
              <rect x="2" y="8" width="4" height="3.500" />
              <rect x="7" y="8" width="4" height="3.500" />
              <rect x="12" y="8" width="4" height="3.500" />
              <rect x="2" y="13" width="4" height="3.500" />
              <rect x="7" y="13" width="4" height="3.500" />
              <rect x="2" y="18" width="4" height="3.500" />
              <rect x="7" y="18" width="4" height="3.500" />
            </g>
            <rect x="12" y="13" width="4" height="8.500" fill="#0f5a9e" />
          </svg>
        </TaskCell>
        <TaskCell $w={50} $running>
          <ChromeLogo />
        </TaskCell>
        <TaskCell $w={48} $running $active>
          <ExcelLogo />
          <ExcelDivider />
        </TaskCell>
        <Tray>
          <TrayCell $w={33} $pr={8}>
            <svg width="24" height="22" viewBox="0 0 24 22">
              <path d="M9 0l2 4 4 -1-1 4 3 2-3 2H5L2 8l3-2-1-3 3 1Z" fill="#f5c83a" />
              <path d="M5 20a4 4 0 0 1 0-8 7 7 0 0 1 13 0 4 4 0 0 1 1 8Z" fill="#cfe6f7" stroke="#9ac3e0" strokeWidth="0.700" />
            </svg>
          </TrayCell>
          <TrayText $w={38}>23°C</TrayText>
          <TrayText $w={93}>Parc. nublado</TrayText>
          <TrayCell $w={24}><ChevronUp size={15} strokeWidth={1.400} color="#111" /></TrayCell>
          <TrayCell $w={25}>
            <svg width="14" height="18" viewBox="0 0 14 18" fill="none" stroke="#222">
              <path d="M2 2.500a4 4 0 0 1 7 0M2 15.500a4 4 0 0 0 7 0" />
              <rect x="1.500" y="6.500" width="8" height="6" rx="1" />
              <path d="M9.500 9l3.500-2v5l-3.500-2" />
            </svg>
          </TrayCell>
          <TrayCell $w={25}><Cloud size={17} strokeWidth={1.200} color="#222" fill="#9a9a9a" /></TrayCell>
          <TrayCell $w={24}>
            <svg width="17" height="12" viewBox="0 0 17 12" fill="none" stroke="#111">
              <rect x="4.500" y="2.500" width="11" height="7" />
              <rect x="6" y="4" width="8" height="4" fill="#111" />
              <path d="M0 6h3M2 3.500v5" />
            </svg>
          </TrayCell>
          <TrayCell $w={24}><Wifi size={16} strokeWidth={1.400} color="#333" /></TrayCell>
          <TrayCell $w={24}><Volume2 size={16} strokeWidth={1.200} color="#222" /></TrayCell>
          <Clock>19:00<br />05/09/2021</Clock>
          <TrayCell $w={46}>
            <svg width="16" height="16" viewBox="0 0 16 16">
              <path d="M0 0h16v12H6l-3 3v-3H0Z" fill="#111" />
              <path d="M3 3.500h10M3 6h10M3 8.500h7" stroke="#e3d9dc" />
            </svg>
            <NotifBadge>8</NotifBadge>
          </TrayCell>
        </Tray>
      </TaskBar>

      <Dialog>
        <DialogHead>
          <HeadTitle>Filtro avançado</HeadTitle>
          <HeadHelp>?</HeadHelp>
          <HeadClose><X size={24} strokeWidth={1} color="#111" /></HeadClose>
        </DialogHead>
        <DialogBody>
          <Legend>Ação</Legend>
          <RadioRow><RadioDot $on /><span><u>F</u>iltrar a lista no local</span></RadioRow>
          <RadioRow><RadioDot /><span>C<u>o</u>piar para outro local</span></RadioRow>
          <Ranges>
            <RangeRow>
              <RangeLabel>I<u>n</u>tervalo da lista:</RangeLabel>
              <RangeField><RangeClip>$A$6:$K$13</RangeClip></RangeField>
              <RangeBtn><Arrow /></RangeBtn>
            </RangeRow>
            <RangeRow>
              <RangeLabel><u>I</u>ntervalo de critérios:</RangeLabel>
              <RangeField><RangeClip>'FINANCEIRO <Caret2 />DIÁRIO'!</RangeClip></RangeField>
              <RangeBtn><Arrow /></RangeBtn>
            </RangeRow>
            <RangeRow $off>
              <RangeLabel>Copiar para:</RangeLabel>
              <RangeField><RangeClip $off /></RangeField>
              <RangeBtn><Arrow /></RangeBtn>
            </RangeRow>
          </Ranges>
          <CheckRow>
            <CheckBox />
            <span>Somente registros e<u>x</u>clusivos</span>
          </CheckRow>
          <DialogButtons>
            <DlgBtn $primary>OK</DlgBtn>
            <DlgBtn>Cancelar</DlgBtn>
          </DialogButtons>
        </DialogBody>
      </Dialog>
    </Page>
  );
}
